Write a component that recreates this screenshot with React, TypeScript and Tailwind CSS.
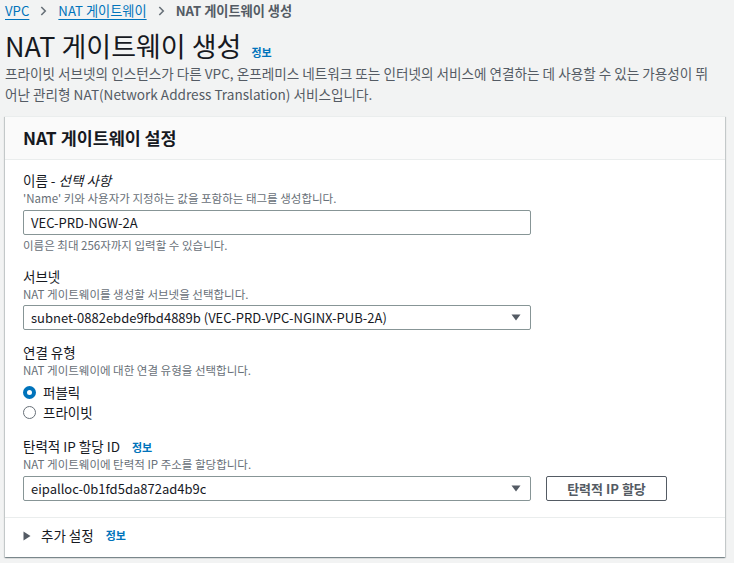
import React from "react";

function Chevron() {
  return (
    <svg viewBox="0 0 8 12" className="mx-[11px] h-[12px] w-[7px]" fill="none">
      <path d="M1.5 1.5 6 6l-4.5 4.5" stroke="#687078" strokeWidth="1.8" />
    </svg>
  );
}

function Caret() {
  return (
    <svg viewBox="0 0 10 7" className="h-[7px] w-[10px]">
      <path d="M0.5 0.5h9L5 6.5z" fill="#545b64" />
    </svg>
  );
}

function Info({ className = "" }: { className?: string }) {
  return <span className={"text-[11px] font-bold text-[#0073bb] " + className}>정보</span>;
}

function Label({ children }: { children: React.ReactNode }) {
  return <div className="text-[13.5px] leading-[19px] text-[#16191f]">{children}</div>;
}

function Hint({ children }: { children: React.ReactNode }) {
  return <div className="text-[11.5px] leading-[16px] text-[#687078]">{children}</div>;
}

function SelectBox({ value, className = "" }: { value: string; className?: string }) {
  return (
    <div
      className={
        "flex h-[25px] w-[508px] items-center justify-between rounded-[2px] border border-[#879596] bg-white pl-[7px] pr-[9px] text-[13px] text-[#16191f] " +
        className
      }
    >
      <span className="truncate">{value}</span>
      <Caret />
    </div>
  );
}

function Radio({ checked, label }: { checked?: boolean; label: string }) {
  return (
    <div className="flex h-[20px] items-center gap-[7px]">
      {checked ? (
        <span className="h-[13px] w-[13px] rounded-full border-[4px] border-[#0073bb] bg-white" />
      ) : (
        <span className="h-[13px] w-[13px] rounded-full border border-[#687078] bg-white" />
      )}
      <span className="text-[13.5px] text-[#16191f]">{label}</span>
    </div>
  );
}

export default function App() {
  return (
    <div className="min-h-[563px] w-[734px] bg-[#f2f3f3] pl-[5px] font-['Noto_Sans_CJK_KR',sans-serif]">
      {/* breadcrumb */}
      <div className="flex h-[20px] items-center pt-[2px] text-[13.2px] leading-[20px]">
        <span className="text-[#0073bb] underline underline-offset-[3px]">VPC</span>
        <Chevron />
        <span className="text-[#0073bb] underline underline-offset-[3px]">NAT 게이트웨이</span>
        <Chevron />
        <span className="font-bold text-[#545b64]">NAT 게이트웨이 생성</span>
      </div>

      <div className="mt-[9px] flex items-baseline">
        <h1 className="text-[27px] leading-[34px] text-[#16191f]">NAT 게이트웨이 생성</h1>
        <Info className="ml-[10px]" />
      </div>

      <p className="whitespace-nowrap text-[13.6px] leading-[21px] text-[#545b64]">
        프라이빗 서브넷의 인스턴스가 다른 VPC, 온프레미스 네트워크 또는 인터넷의 서비스에 연결하는 데 사용할 수 있는 가용성이 뛰
        <br />
        어난 관리형 NAT(Network Address Translation) 서비스입니다.
      </p>

      <div className="mt-[11px] w-[720px] border-t border-[#eaeded] bg-white shadow-[0_1px_1px_0_rgba(0,28,36,0.3),1px_1px_1px_0_rgba(0,28,36,0.15),-1px_1px_1px_0_rgba(0,28,36,0.15)]">
        <div className="flex h-[43px] items-center border-b border-[#eaeded] bg-[#fafafa] px-[18px]">
          <h2 className="text-[17.4px] font-bold text-[#16191f]">NAT 게이트웨이 설정</h2>
        </div>

        <div className="px-[18px] pb-[16px] pt-[11px]">
          <Label>
            이름 - <i>선택 사항</i>
          </Label>
          <Hint>'Name' 키와 사용자가 지정하는 값을 포함하는 태그를 생성합니다.</Hint>
          <div className="mt-[4px] flex h-[25px] w-[508px] items-center rounded-[2px] border border-[#879596] bg-white px-[7px] text-[13px] text-[#16191f]">
            VEC-PRD-NGW-2A
          </div>
          <div className="mt-[2px]">
            <Hint>이름은 최대 256자까지 입력할 수 있습니다.</Hint>
          </div>

          <div className="mt-[14px]">
            <Label>서브넷</Label>
          </div>
          <Hint>NAT 게이트웨이를 생성할 서브넷을 선택합니다.</Hint>
          <SelectBox className="mt-[3px]" value="subnet-0882ebde9fbd4889b (VEC-PRD-VPC-NGINX-PUB-2A)" />

          <div className="mt-[13px]">
            <Label>연결 유형</Label>
          </div>
          <Hint>NAT 게이트웨이에 대한 연결 유형을 선택합니다.</Hint>
          <div className="mt-[4px]">
            <Radio checked label="퍼블릭" />
            <Radio label="프라이빗" />
          </div>

          <div className="mt-[15px] flex items-baseline">
            <Label>탄력적 IP 할당 ID</Label>
            <Info className="ml-[12px]" />
          </div>
          <Hint>NAT 게이트웨이에 탄력적 IP 주소를 할당합니다.</Hint>
          <div className="mt-[4px] flex items-center gap-[15px]">
            <SelectBox value="eipalloc-0b1fd5da872ad4b9c" />
            <button
              type="button"
              className="flex h-[25px] w-[121px] items-center justify-center rounded-[2px] border border-[#545b64] bg-white text-[13px] font-bold text-[#545b64]"
            >
              탄력적 IP 할당
            </button>
          </div>
        </div>

        <div className="flex h-[40px] items-center border-t border-[#eaeded] pb-[4px] pl-[18px]">
          <svg viewBox="0 0 8 10" className="h-[10px] w-[8px]">
            <path d="M0.5 0.5 7.5 5 0.5 9.5z" fill="#545b64" />
          </svg>
          <span className="ml-[10px] text-[13.5px] text-[#16191f]">추가 설정</span>
          <Info className="ml-[12px]" />
        </div>
      </div>
    </div>
  );
}
